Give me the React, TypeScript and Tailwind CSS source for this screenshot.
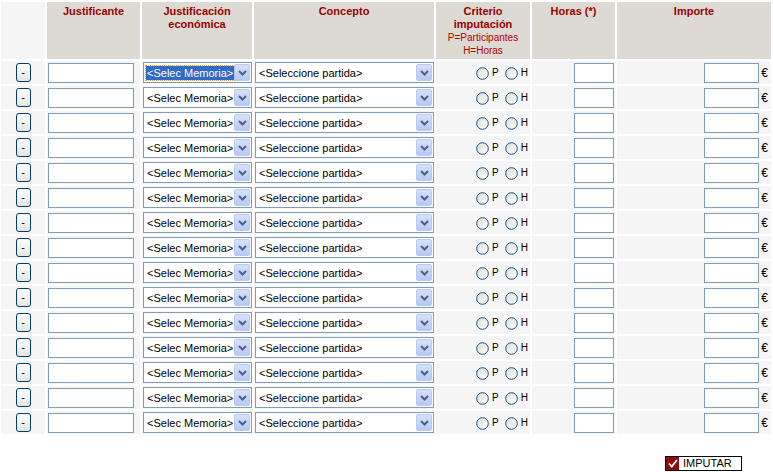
import React from "react";

const ROWS = 15;

function XpArrow() {
  return (
    <span className="flex h-[17px] w-[16px] shrink-0 items-center justify-center rounded-[2px] border border-[#b9c9ef] bg-gradient-to-b from-[#d6e1fc] to-[#b6c9f6]">
      <svg width="9" height="6" viewBox="0 0 9 6">
        <path d="M1 1 L4.5 4.5 L8 1" fill="none" stroke="#4d6185" strokeWidth="2" />
      </svg>
    </span>
  );
}

function FakeSelect({ label, width, active }: { label: string; width: string; active?: boolean }) {
  return (
    <div className={`ml-px flex h-[21px] ${width} items-center justify-between overflow-hidden border border-[#7f9db9] bg-white pl-[2px] pr-px`}>
      {active ? (
        <span className="whitespace-nowrap bg-[#316ac5] px-px leading-[14px] text-white outline-1 outline-dotted outline-[#d8a040]">{label}</span>
      ) : (
        <span className="whitespace-nowrap px-px leading-[14px] text-black">{label}</span>
      )}
      <XpArrow />
    </div>
  );
}

function Radio({ label }: { label: string }) {
  return (
    <span className="flex items-center gap-[3px]">
      <svg width="13" height="13" viewBox="0 0 13 13">
        <defs>
          <linearGradient id="rg" x1="0" y1="0" x2="1" y2="1">
            <stop offset="0" stopColor="#dcdcd6" />
            <stop offset="1" stopColor="#ffffff" />
          </linearGradient>
        </defs>
        <circle cx="6.5" cy="6.5" r="5.8" fill="url(#rg)" stroke="#1c5180" strokeWidth="1" />
      </svg>
      <span className="text-[10px] leading-none text-black">{label}</span>
    </span>
  );
}

function Row({ first }: { first: boolean }) {
  return (
    <tr className="h-[23px]">
      <td className="w-[44px] bg-[#f5f5f5] p-0 text-center align-middle">
        <span className="mx-auto flex h-[19px] w-[15px] items-center justify-center rounded-[3px] border border-[#003c74] bg-gradient-to-b from-white to-[#e6e5de] text-[11px] leading-none text-black">
          -
        </span>
      </td>
      <td className="w-[93px] bg-[#f5f5f5] p-0 align-middle">
        <div className="ml-px h-[20px] w-[86px] border border-[#7f9db9] bg-white" />
      </td>
      <td className="w-[109px] bg-[#f5f5f5] p-0 align-middle">
        <FakeSelect label="<Selec Memoria>" width="w-[109px]" active={first} />
      </td>
      <td className="w-[180px] bg-[#f5f5f5] p-0 align-middle">
        <FakeSelect label="<Seleccione partida>" width="w-[179px]" />
      </td>
      <td className="w-[94px] bg-[#f5f5f5] p-0 align-middle">
        <div className="flex items-center justify-end gap-[6px] pr-[2px] pt-px">
          <Radio label="P" />
          <Radio label="H" />
        </div>
      </td>
      <td className="w-[83px] bg-[#f5f5f5] p-0 pr-px align-middle">
        <div className="ml-auto h-[20px] w-[40px] border border-[#7f9db9] bg-white" />
      </td>
      <td className="w-[154px] bg-[#f5f5f5] p-0 align-middle">
        <div className="flex items-center justify-end gap-[2px] pr-[3px]">
          <div className="h-[20px] w-[55px] border border-[#7f9db9] bg-white" />
          <span className="text-[12px] leading-none text-black">€</span>
        </div>
      </td>
    </tr>
  );
}

export default function App() {
  return (
    <div className="h-[472px] w-[773px] overflow-hidden bg-white font-['Liberation_Sans',Arial,sans-serif] text-[11px]">
      <table className="-ml-px table-fixed border-separate border-spacing-[2px]">
        <thead>
          <tr className="h-[57px]">
            <th className="w-[44px] bg-[#f5f5f5] p-0" />
            <th className="w-[93px] bg-[#dcdad3] p-0 pt-[3px] align-top text-[11px] font-bold leading-[13px] text-[#990000]">
              Justificante
            </th>
            <th className="w-[109px] bg-[#dcdad3] p-0 pt-[3px] align-top text-[11px] font-bold leading-[13px] text-[#990000]">
              Justificación
              <br />
              económica
            </th>
            <th className="w-[180px] bg-[#dcdad3] p-0 pt-[3px] align-top text-[11px] font-bold leading-[13px] text-[#990000]">
              Concepto
            </th>
            <th className="w-[94px] bg-[#dcdad3] p-0 pt-[3px] align-top text-[11px] font-bold leading-[13px] text-[#990000]">
              Criterio
              <br />
              imputación
              <br />
              <span className="text-[10px] font-normal text-[#b40000]">P=Participantes</span>
              <br />
              <span className="text-[10px] font-normal text-[#b40000]">H=Horas</span>
            </th>
            <th className="w-[83px] bg-[#dcdad3] p-0 pt-[3px] align-top text-[11px] font-bold leading-[13px] text-[#990000]">
              Horas (*)
            </th>
            <th className="w-[154px] bg-[#dcdad3] p-0 pt-[3px] align-top text-[11px] font-bold leading-[13px] text-[#990000]">
              Importe
            </th>
          </tr>
        </thead>
        <tbody>
          {Array.from({ length: ROWS }).map((_, i) => (
            <Row key={i} first={i === 0} />
          ))}
        </tbody>
      </table>
      <div className="mt-[20px] pl-[665px]">
        <div className="flex h-[15px] w-[77px] items-center border border-black bg-white">
          <span className="flex h-[13px] w-[13px] items-center justify-center bg-[#8b0a0a]">
            <svg width="10" height="9" viewBox="0 0 10 9">
              <path d="M1 4.5 L3.8 7.5 L9 1" fill="none" stroke="#ffffff" strokeWidth="1.8" />
            </svg>
          </span>
          <span className="pl-[4px] text-[11px] leading-none text-black">IMPUTAR</span>
        </div>
      </div>
    </div>
  );
}
